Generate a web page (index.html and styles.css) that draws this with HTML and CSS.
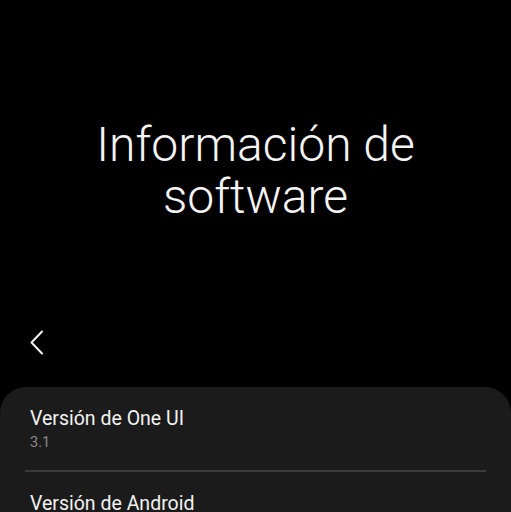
FILE: index.html
```html
<!DOCTYPE html>
<html lang="es">
<head>
    <meta charset="UTF-8">
    <meta name="viewport" content="width=device-width, initial-scale=1.0">
    <title>Información de software</title>
    <link rel="stylesheet" href="styles.css">
</head>
<body>

<div class="screen">
    <header class="hero">
        <h1>Información de<br>software</h1>
    </header>

    <div class="toolbar">
        <button class="back" aria-label="Atrás">
            <svg width="16" height="26" viewBox="0 0 16 26">
                <polyline points="13,1.5 2.5,12.5 13,23.5" fill="none" stroke="#f2f2f2" stroke-width="2" stroke-linecap="round" stroke-linejoin="round"/>
            </svg>
        </button>
    </div>

    <div class="card">
        <div class="row">
            <div class="row-title">Versión de One UI</div>
            <div class="row-value">3.1</div>
        </div>
        <div class="divider"></div>
        <div class="row">
            <div class="row-title">Versión de Android</div>
        </div>
    </div>
</div>

</body>
</html>
```

FILE: styles.css
```css
html, body {
    margin: 0;
    padding: 0;
    background-color: #000;
    color: #fafafa;
    font-family: Roboto, "Noto Sans", sans-serif;
}
.screen {
    width: 511px;
    height: 512px;
    overflow: hidden;
}
.hero {
    height: 320px;
    display: flex;
    align-items: center;
    justify-content: center;
    padding-top: 22px;
    box-sizing: border-box;
}
.hero h1 {
    margin: 0;
    font-weight: 300;
    font-size: 48px;
    line-height: 52px;
    text-align: center;
    color: #f4f4f4;
}
.toolbar {
    height: 46px;
    display: flex;
    align-items: center;
    padding-left: 29px;
}
.back {
    background: none;
    border: none;
    padding: 0;
    cursor: pointer;
    display: flex;
}
.card {
    margin-top: 21px;
    background-color: #1b1b1b;
    border-radius: 26px 26px 0 0;
    padding: 20px 25px 0;
}
.row {
    padding: 0 5px;
}
.row-title {
    font-size: 19.5px;
    line-height: 24px;
    color: #f2f2f2;
}
.row-value {
    font-size: 14.5px;
    line-height: 18px;
    color: #8a8a8a;
    margin-top: 3px;
}
.divider {
    height: 2px;
    background-color: #3a3a3a;
    margin: 18px 0 20px;
}
```
